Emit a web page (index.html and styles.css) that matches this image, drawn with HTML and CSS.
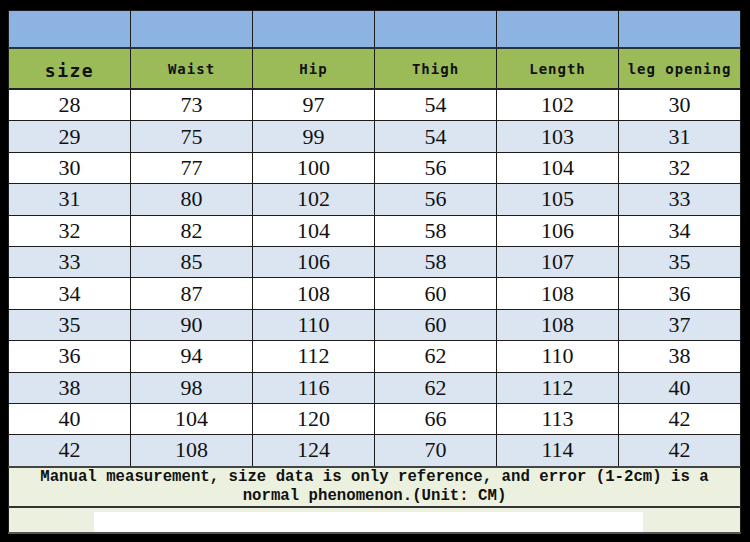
FILE: index.html
```html
<!DOCTYPE html>
<html>
<head>
<meta charset="utf-8">
<link rel="stylesheet" href="styles.css">
</head>
<body>
<div class="page">
<table class="chart">
  <tr class="blank"><td></td><td></td><td></td><td></td><td></td><td></td></tr>
  <tr class="head">
    <th class="size">size</th><th>Waist</th><th>Hip</th><th>Thigh</th><th>Length</th><th>leg opening</th>
  </tr>
  <tr class="w"><td>28</td><td>73</td><td>97</td><td>54</td><td>102</td><td>30</td></tr>
  <tr class="b"><td>29</td><td>75</td><td>99</td><td>54</td><td>103</td><td>31</td></tr>
  <tr class="w"><td>30</td><td>77</td><td>100</td><td>56</td><td>104</td><td>32</td></tr>
  <tr class="b"><td>31</td><td>80</td><td>102</td><td>56</td><td>105</td><td>33</td></tr>
  <tr class="w"><td>32</td><td>82</td><td>104</td><td>58</td><td>106</td><td>34</td></tr>
  <tr class="b"><td>33</td><td>85</td><td>106</td><td>58</td><td>107</td><td>35</td></tr>
  <tr class="w"><td>34</td><td>87</td><td>108</td><td>60</td><td>108</td><td>36</td></tr>
  <tr class="b"><td>35</td><td>90</td><td>110</td><td>60</td><td>108</td><td>37</td></tr>
  <tr class="w"><td>36</td><td>94</td><td>112</td><td>62</td><td>110</td><td>38</td></tr>
  <tr class="b"><td>38</td><td>98</td><td>116</td><td>62</td><td>112</td><td>40</td></tr>
  <tr class="w"><td>40</td><td>104</td><td>120</td><td>66</td><td>113</td><td>42</td></tr>
  <tr class="b"><td>42</td><td>108</td><td>124</td><td>70</td><td>114</td><td>42</td></tr>
  <tr class="note"><td colspan="6">Manual measurement, size data is only reference, and error (1-2cm) is a<br>normal phenomenon.(Unit: CM)</td></tr>
  <tr class="last"><td colspan="6"><div class="strip"></div></td></tr>
</table>
</div>
</body>
</html>
```

FILE: styles.css
```css
html, body {
  margin: 0;
  padding: 0;
  background: #000;
}
.page {
  width: 750px;
  height: 542px;
  padding: 10px 0 0 8px;
  box-sizing: border-box;
}
.chart {
  border-collapse: collapse;
  table-layout: fixed;
  width: 733px;
}
.chart td, .chart th {
  border: 1px solid #1c1c1c;
  padding: 0;
  text-align: center;
}
.blank td {
  height: 36px;
  background: #8db3e2;
  border-bottom: 2px solid #2a3336;
}
.head th {
  height: 36px;
  background: #9bbb59;
  font-family: "DejaVu Sans Mono", monospace;
  font-weight: bold;
  font-size: 14px;
  letter-spacing: 1px;
  color: #111;
  border-bottom: 2px solid #222;
}
.head th.size {
  font-size: 18px;
  letter-spacing: 1.5px;
  padding-top: 3px;
}
.w td, .b td {
  height: 30.4px;
  font-family: "Liberation Serif", serif;
  font-size: 22px;
  color: #111;
  line-height: 22px;
}
.w td { background: #ffffff; }
.b td { background: #dbe5f1; }
.note td {
  height: 31px;
  background: #ebf1de;
  border-top: 2px solid #444;
  border-bottom: 2px solid #333;
  font-family: "Liberation Mono", monospace;
  font-weight: bold;
  font-size: 15.7px;
  line-height: 19px;
  color: #111;
  padding-top: 0;
}
.last td {
  height: 24px;
  background: #ebf1de;
  border-bottom: 2px solid #555;
  text-align: left;
  vertical-align: top;
}
.strip {
  width: 549px;
  height: 20px;
  margin: 4px 0 0 85px;
  background: #fff;
}
```
